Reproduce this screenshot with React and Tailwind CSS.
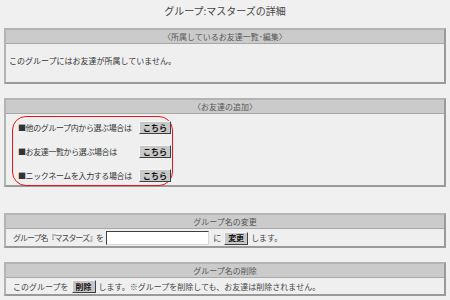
const font = { fontFamily: '"Noto Sans CJK JP", "Noto Sans", sans-serif' }

function Btn({ children }) {
  return (
    <button className="h-[13px] px-[3px] bg-[#c8c8c8] border border-t-[#f4f4f4] border-l-[#f4f4f4] border-b-[#404040] border-r-[#404040] text-[8px] leading-none font-bold text-[#111]">
      {children}
    </button>
  )
}

function Panel({ title, className, children }) {
  return (
    <div className={`mx-[4px] border-2 border-t-[#b4b4b4] border-l-[#b4b4b4] border-b-[#9a9a9a] border-r-[#9a9a9a] bg-[#efefef] ${className}`}>
      <div className="h-[14px] bg-[#cbcbcb] border-b border-[#a8a8a8] flex items-center justify-center text-[8px] text-[#555]">
        {title}
      </div>
      {children}
    </div>
  )
}

export default function App() {
  return (
    <div className="w-[450px] h-[300px] bg-[#f0f0f0] text-[#333] overflow-hidden" style={font}>
      <div className="h-[28px] pt-[3px] text-center text-[10px] text-[#444]">グループ:マスターズの詳細</div>

      <Panel title="〈所属しているお友達一覧･編集〉" className="h-[56px]">
        <div className="px-[3px] pt-[11px] text-[8px]">このグループにはお友達が所属していません。</div>
      </Panel>

      <Panel title="〈お友達の追加〉" className="mt-[14px] h-[89px]">
        <div className="pl-[6px] pt-[2px]">
          <div className="w-[161px] h-[70px] border-[1.5px] border-[#e8141e] rounded-[14px] pl-[5px] pt-[4px] flex flex-col gap-[11px] text-[8px] whitespace-nowrap">
            <div className="flex items-center h-[13px]">
              <span className="w-[121px] tracking-[-0.4px]">■他のグループ内から選ぶ場合は</span>
              <Btn>こちら</Btn>
            </div>
            <div className="flex items-center h-[13px]">
              <span className="w-[121px] tracking-[-0.4px]">■お友達一覧から選ぶ場合は</span>
              <Btn>こちら</Btn>
            </div>
            <div className="flex items-center h-[13px]">
              <span className="w-[121px] tracking-[-0.4px]">■ニックネームを入力する場合は</span>
              <Btn>こちら</Btn>
            </div>
          </div>
        </div>
      </Panel>

      <Panel title="グループ名の変更" className="mt-[26px] h-[35px]">
        <div className="flex items-center pl-[7px] pt-[2px] text-[8px] text-[#444] whitespace-nowrap">
          <span className="tracking-[-1px]">グループ名『マスターズ』を</span>
          <input className="ml-[3px] w-[103px] h-[14px] bg-white border border-t-[#404040] border-l-[#404040] border-b-[#d8d8d8] border-r-[#d8d8d8]" />
          <span className="ml-[4px] mr-[3px]">に</span>
          <Btn>変更</Btn>
          <span className="ml-[3px]">します。</span>
        </div>
      </Panel>

      <Panel title="グループ名の削除" className="mt-[14px] h-[34px]">
        <div className="flex items-center pl-[7px] pt-[2px] text-[8px] text-[#444] whitespace-nowrap">
          <span className="mr-[3px]">このグループを</span>
          <Btn>削除</Btn>
          <span className="ml-[3px]">します。※グループを削除しても、お友達は削除されません。</span>
        </div>
      </Panel>
    </div>
  )
}
